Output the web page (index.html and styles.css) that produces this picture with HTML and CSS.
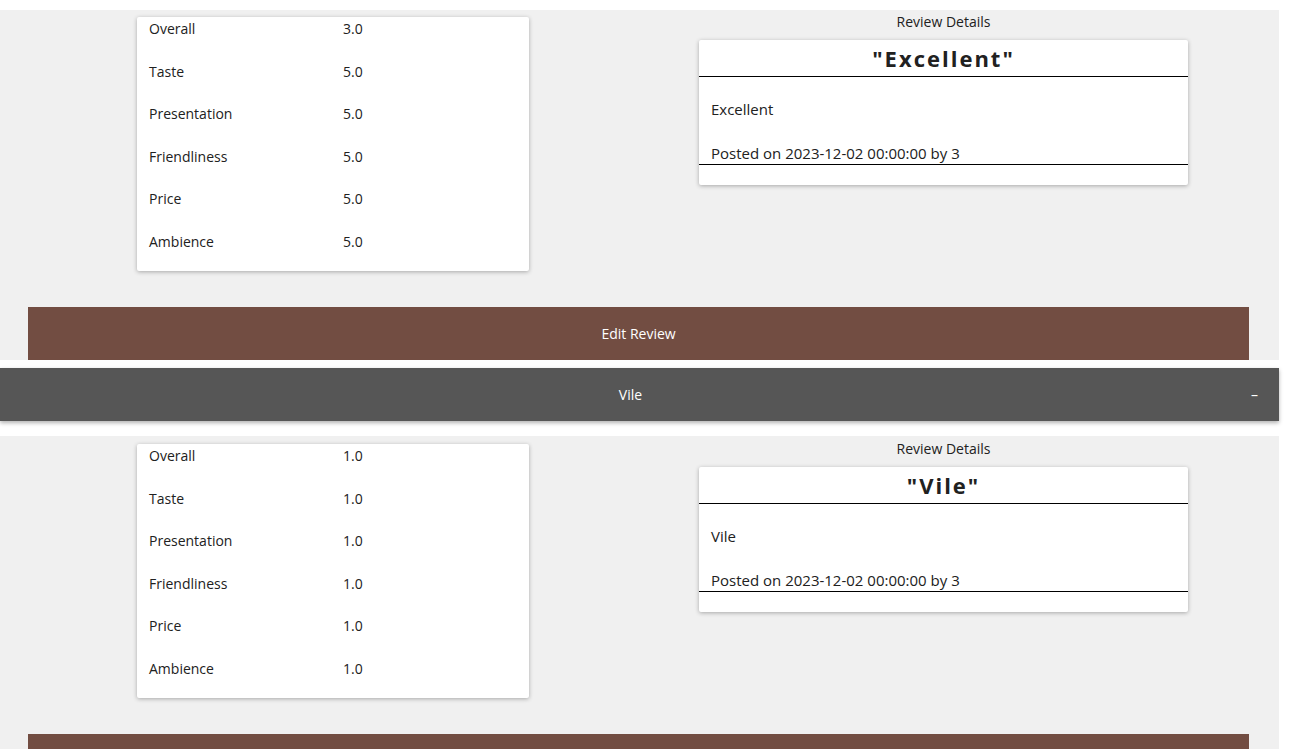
FILE: index.html
```html
<!DOCTYPE html>
<html>
<head>
<meta charset="utf-8">
<link rel="stylesheet" href="styles.css">
</head>
<body>
<div class="page">
  <section class="panel">
    <div class="columns">
      <div class="ratings-card">
        <div class="row"><span class="label">Overall</span><span class="value">3.0</span></div>
        <div class="row"><span class="label">Taste</span><span class="value">5.0</span></div>
        <div class="row"><span class="label">Presentation</span><span class="value">5.0</span></div>
        <div class="row"><span class="label">Friendliness</span><span class="value">5.0</span></div>
        <div class="row"><span class="label">Price</span><span class="value">5.0</span></div>
        <div class="row"><span class="label">Ambience</span><span class="value">5.0</span></div>
      </div>
      <div class="details">
        <div class="details-heading">Review Details</div>
        <div class="details-card">
          <div class="details-title">"Excellent"</div>
          <div class="details-body">
            <p class="details-text">Excellent</p>
            <p class="details-posted">Posted on 2023-12-02 00:00:00 by 3</p>
          </div>
        </div>
      </div>
    </div>
    <button class="edit-btn">Edit Review</button>
  </section>

  <div class="acc-header">
    <span class="acc-title">Vile</span>
    <span class="acc-toggle">–</span>
  </div>

  <section class="panel panel-second">
    <div class="columns">
      <div class="ratings-card">
        <div class="row"><span class="label">Overall</span><span class="value">1.0</span></div>
        <div class="row"><span class="label">Taste</span><span class="value">1.0</span></div>
        <div class="row"><span class="label">Presentation</span><span class="value">1.0</span></div>
        <div class="row"><span class="label">Friendliness</span><span class="value">1.0</span></div>
        <div class="row"><span class="label">Price</span><span class="value">1.0</span></div>
        <div class="row"><span class="label">Ambience</span><span class="value">1.0</span></div>
      </div>
      <div class="details">
        <div class="details-heading">Review Details</div>
        <div class="details-card">
          <div class="details-title">"Vile"</div>
          <div class="details-body">
            <p class="details-text">Vile</p>
            <p class="details-posted">Posted on 2023-12-02 00:00:00 by 3</p>
          </div>
        </div>
      </div>
    </div>
    <button class="edit-btn">Edit Review</button>
  </section>
</div>
</body>
</html>
```

FILE: styles.css
```css
* { box-sizing: border-box; }
html, body { margin: 0; padding: 0; background: #ffffff; }
body {
  font-family: "Open Sans", "Noto Sans", sans-serif;
  font-size: 14px;
  color: #212121;
  overflow: hidden;
  height: 749px;
}
.page {
  width: 1279px;
  padding-top: 10px;
}
.panel {
  background: #f0f0f0;
  padding-top: 7px;
}
.panel-second {
  margin-top: 15px;
  padding-top: 8px;
}
.columns {
  display: flex;
  align-items: flex-start;
}
.ratings-card {
  margin-left: 137px;
  width: 392px;
  background: #fff;
  border-radius: 2px;
  box-shadow: 0 1px 4px rgba(0,0,0,0.3);
  padding: 2px 12px 19px;
  display: flex;
  flex-direction: column;
  gap: 22.6px;
}
.row {
  display: flex;
  line-height: 20px;
}
.label { width: 194px; }
.details {
  margin-left: 170px;
  width: 489px;
  margin-top: -7px;
  padding-top: 2px;
}
.details-heading {
  text-align: center;
  line-height: 20px;
  margin-bottom: 8px;
}
.details-card {
  background: #fff;
  border-radius: 2px;
  box-shadow: 0 1px 4px rgba(0,0,0,0.3);
  padding-bottom: 20px;
}
.details-title {
  text-align: center;
  font-size: 22px;
  font-weight: 700;
  letter-spacing: 2px;
  line-height: 36px;
  border-bottom: 1px solid #000;
}
.details-text {
  margin: 0;
  padding: 22px 12px 0;
  line-height: 20px;
  font-size: 15px;
}
.details-posted {
  margin: 24px 0 0;
  padding: 0 12px 1px;
  line-height: 20px;
  font-size: 15px;
  border-bottom: 1px solid #000;
}
.edit-btn {
  display: block;
  margin: 36px 0 0 28px;
  width: 1221px;
  height: 53px;
  border: none;
  background: #724d42;
  color: #fff;
  font-family: inherit;
  font-size: 14px;
  padding: 0;
  cursor: pointer;
}
.acc-header {
  margin-top: 8px;
  height: 53px;
  background: #565656;
  color: #fff;
  box-shadow: 0 2px 4px rgba(0,0,0,0.3);
  display: flex;
  align-items: center;
  justify-content: center;
  position: relative;
}
.acc-title { margin-left: -18px; }
.acc-toggle {
  position: absolute;
  right: 21px;
  top: 50%;
  transform: translateY(-50%);
  font-size: 14px;
}
```
